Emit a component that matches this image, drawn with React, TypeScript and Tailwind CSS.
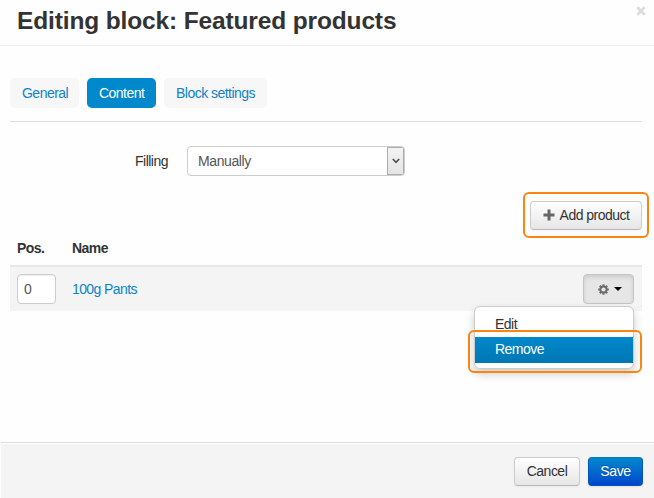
import React from "react";

const button =
  "flex items-center justify-center rounded-[4px] border border-[#cccccc] border-b-[#b8b8b8] bg-gradient-to-b from-white to-[#e6e6e6] text-[#333333] shadow-[0_1px_2px_rgba(0,0,0,0.05)]";

function Tab({ label, width, active = false }: { label: string; width: string; active?: boolean }) {
  return (
    <button
      className={`${width} h-[30px] whitespace-nowrap rounded-[5px] pl-3 text-left ${
        active ? "bg-[#0088cc] text-white" : "bg-[#f7f7f7] text-[#0f83c9]"
      }`}
    >
      {label}
    </button>
  );
}

function GearIcon() {
  return (
    <svg width="11" height="11" viewBox="0 0 11 11">
      <g stroke="#6c6c6c" strokeWidth="2">
        <path d="M5.5 0.2v10.6M0.2 5.5h10.6" />
        <path d="M1.8 1.8l7.4 7.4M9.2 1.8L1.8 9.2" />
      </g>
      <circle cx="5.5" cy="5.5" r="4.1" fill="#6c6c6c" />
      <circle cx="5.5" cy="5.5" r="2.1" fill="#e6e6e6" />
    </svg>
  );
}

export default function App() {
  return (
    <div className="flex h-[498px] w-[654px] flex-col overflow-hidden bg-[#fefefe] font-['Liberation_Sans',Arial,sans-serif] text-[14px] leading-5 tracking-[-0.52px] text-[#333333]">
      <header className="flex h-[46px] shrink-0 items-start justify-between border-b border-[#eeeeee] pl-[17px] pr-2">
        <h1 className="mt-px text-[24.5px] font-bold leading-10 tracking-[-0.14px]">Editing block: Featured products</h1>
        <svg className="mt-[6px]" width="10" height="10" viewBox="0 0 10 10">
          <path d="M1.3 1.3l7.4 7.4M8.7 1.3L1.3 8.7" stroke="#dcdcdc" strokeWidth="2.8" />
        </svg>
      </header>

      <main className="flex flex-1 flex-col pl-[10px] pr-3 pt-8">
        <nav className="flex h-[44px] shrink-0 gap-2 border-b border-[#dddddd]">
          <Tab label="General" width="w-[69px]" />
          <Tab label="Content" width="w-[69px]" active />
          <Tab label="Block settings" width="w-[103px]" />
        </nav>

        <div className="mt-6 flex h-[30px] items-center">
          <label className="w-[158px] text-right">Filling</label>
          <div className="ml-[19px] flex h-[30px] w-[218px] items-stretch overflow-hidden rounded-[4px] border border-[#cccccc] bg-white">
            <span className="flex flex-1 items-center pl-[10px] tracking-[-0.4px] text-[#555555]">Manually</span>
            <span className="flex w-[17px] items-center justify-center border border-[#acacac] bg-gradient-to-b from-[#f3f3f3] to-[#e4e4e4]">
              <svg width="8" height="6" viewBox="0 0 8 6">
                <path d="M0.8 1L4 4.3L7.2 1" fill="none" stroke="#505050" strokeWidth="1.7" />
              </svg>
            </span>
          </div>
        </div>

        <div className="-mr-[7px] mt-4 flex h-[46px] w-[126px] shrink-0 items-start justify-end self-end rounded-[6px] border-2 border-[#fb8511] pr-[5px] pt-[7px]">
          <button className={`${button} h-[29px] w-[112px] gap-[5px] pb-px`}>
            <svg width="12" height="12" viewBox="0 0 12 12">
              <path d="M6 0.5v11M0.5 6h11" stroke="#666666" strokeWidth="3" />
            </svg>
            Add product
          </button>
        </div>

        <div className="flex h-[27px] shrink-0 pl-[7px] font-bold">
          <span className="w-[55px]">Pos.</span>
          <span>Name</span>
        </div>
        <div className="flex h-[46px] shrink-0 items-center border-t-2 border-[#e7e7e7] bg-[#f4f4f4] pl-[7px] pr-2">
          <div className="flex h-[30px] w-[39px] items-center rounded-[4px] border border-[#cccccc] bg-white pl-[6px] text-[#555555] shadow-[inset_0_1px_1px_rgba(0,0,0,0.075)]">
            0
          </div>
          <a className="ml-4 tracking-[-0.6px] text-[#0f83c9]">100g Pants</a>
          <div className="relative ml-auto">
            <button className="flex h-[30px] w-[51px] items-center justify-center gap-[5px] rounded-[4px] border border-[#c5c5c5] bg-[#e6e6e6] pl-[2px] shadow-[inset_0_2px_4px_rgba(0,0,0,0.12)]">
              <GearIcon />
              <span className="mb-px h-0 w-0 border-x-4 border-t-4 border-x-transparent border-t-black" />
            </button>
            <div className="absolute right-0 top-8 h-[63px] w-[160px] rounded-[6px] border border-[#cccccc] bg-white pt-1 shadow-[0_5px_10px_rgba(0,0,0,0.2)]">
              <div className="flex h-[26px] items-center pl-5">Edit</div>
              <div className="flex h-[26px] items-center bg-gradient-to-b from-[#0088cc] to-[#0077b3] pb-[2px] pl-5 text-white">
                Remove
              </div>
            </div>
            <div className="absolute -right-2 top-14 h-[43px] w-[174px] rounded-[6px] border-2 border-[#fb8511]" />
          </div>
        </div>
      </main>

      <footer className="ml-px flex h-[56px] shrink-0 flex-col border-t border-[#dddddd] bg-white pt-px">
        <div className="flex flex-1 justify-end gap-2 bg-[#f4f4f4] pr-[11px] pt-[13px]">
          <button className={`${button} h-[29px] w-[66px] pb-px`}>Cancel</button>
          <button className="h-[29px] w-[55px] rounded-[4px] border border-[#0754b8] border-t-[#0878c4] bg-gradient-to-b from-[#0088cc] to-[#0044cc] pb-px tracking-[-0.4px] text-white shadow-[0_1px_2px_rgba(0,0,0,0.08)] [text-shadow:0_-1px_0_rgba(0,0,0,0.25)]">
            Save
          </button>
        </div>
      </footer>
    </div>
  );
}
